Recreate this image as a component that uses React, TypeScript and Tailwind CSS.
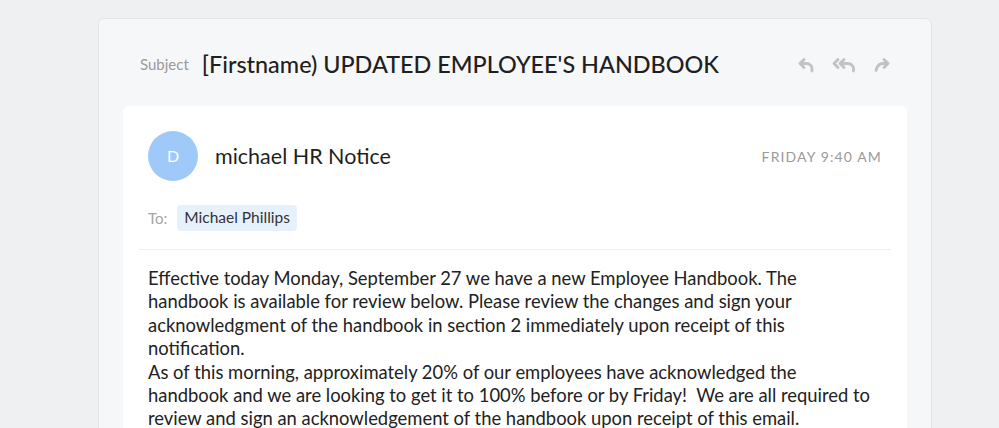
export default function App() {
  return (
    <div className="h-[428px] overflow-hidden bg-[#eef0f2] pt-[18px] font-['Lato','Liberation_Sans',sans-serif]">
      <div className="ml-[98px] w-[834px] rounded-md border border-[#e3e5e8] bg-[#f6f7f9] px-6">
        <div className="flex h-[87px] items-center px-[17px] pt-1">
          <span className="text-[15px] text-[#9a9a9a]">Subject</span>
          <h1 className="ml-[13px] text-[23.4px] font-medium text-[#1f1f1f]">
            [Firstname) UPDATED EMPLOYEE'S HANDBOOK
          </h1>
          <div className="ml-auto flex items-center gap-[18px] text-[#c2c2c2]">
            <svg width="16" height="16" viewBox="0 0 16 16" fill="none" stroke="currentColor" strokeWidth="2.8" strokeLinecap="round" strokeLinejoin="round">
              <path d="M6 2.5L2 6.5L6 10.5" />
              <path d="M2.3 6.5H8.5c3.2 0 5.5 2.2 5.5 5V14" />
            </svg>
            <svg width="24" height="16" viewBox="0 0 24 16" fill="none" stroke="currentColor" strokeWidth="2.8" strokeLinecap="round" strokeLinejoin="round">
              <path d="M6 2.5L2 6.5L6 10.5" />
              <path d="M12 2.5L8 6.5L12 10.5" />
              <path d="M8.3 6.5H15.5c3.2 0 6 2.2 6 5V14" />
            </svg>
            <svg width="16" height="16" viewBox="0 0 16 16" fill="none" stroke="currentColor" strokeWidth="2.8" strokeLinecap="round" strokeLinejoin="round">
              <path d="M10 2.5L14 6.5L10 10.5" />
              <path d="M13.7 6.5H9c-3.5 0-6 2.8-7 7" />
            </svg>
          </div>
        </div>

        <div className="min-h-[420px] rounded-t-md bg-white px-4 pt-[25px]">
          <div className="flex items-center px-[9px]">
            <div className="flex h-[50px] w-[50px] items-center justify-center rounded-full bg-[#9ec9f9] text-[16px] text-white">
              D
            </div>
            <span className="ml-[17px] text-[21.5px] text-[#1f1f1f]">michael HR Notice</span>
            <span className="ml-auto text-[14px] tracking-[0.08em] text-[#9a9a9a]">FRIDAY 9:40 AM</span>
          </div>

          <div className="mt-6 flex items-center px-[9px]">
            <span className="text-[15px] text-[#a5a5a5]">To:</span>
            <span className="ml-[10px] flex h-[26px] items-center rounded bg-[#e7f1fc] px-[7px] text-[15.5px] text-[#333]">
              Michael Phillips
            </span>
          </div>

          <div className="mt-[18px] border-t border-[#eeeeee]" />

          <div className="whitespace-nowrap px-[9px] pt-[17px] text-[18.4px] leading-[23.4px] text-[#222]">
            <p>
              Effective today Monday, September 27 we have a new Employee Handbook. The
              <br />
              handbook is available for review below. Please review the changes and sign your
              <br />
              acknowledgment of the handbook in section 2 immediately upon receipt of this
              <br />
              notification.
            </p>
            <p>
              As of this morning, approximately 20% of our employees have acknowledged the
              <br />
              handbook and we are looking to get it to 100% before or by Friday!&nbsp; We are all required to
              <br />
              review and sign an acknowledgement of the handbook upon receipt of this email.
            </p>
          </div>
        </div>
      </div>
    </div>
  )
}
